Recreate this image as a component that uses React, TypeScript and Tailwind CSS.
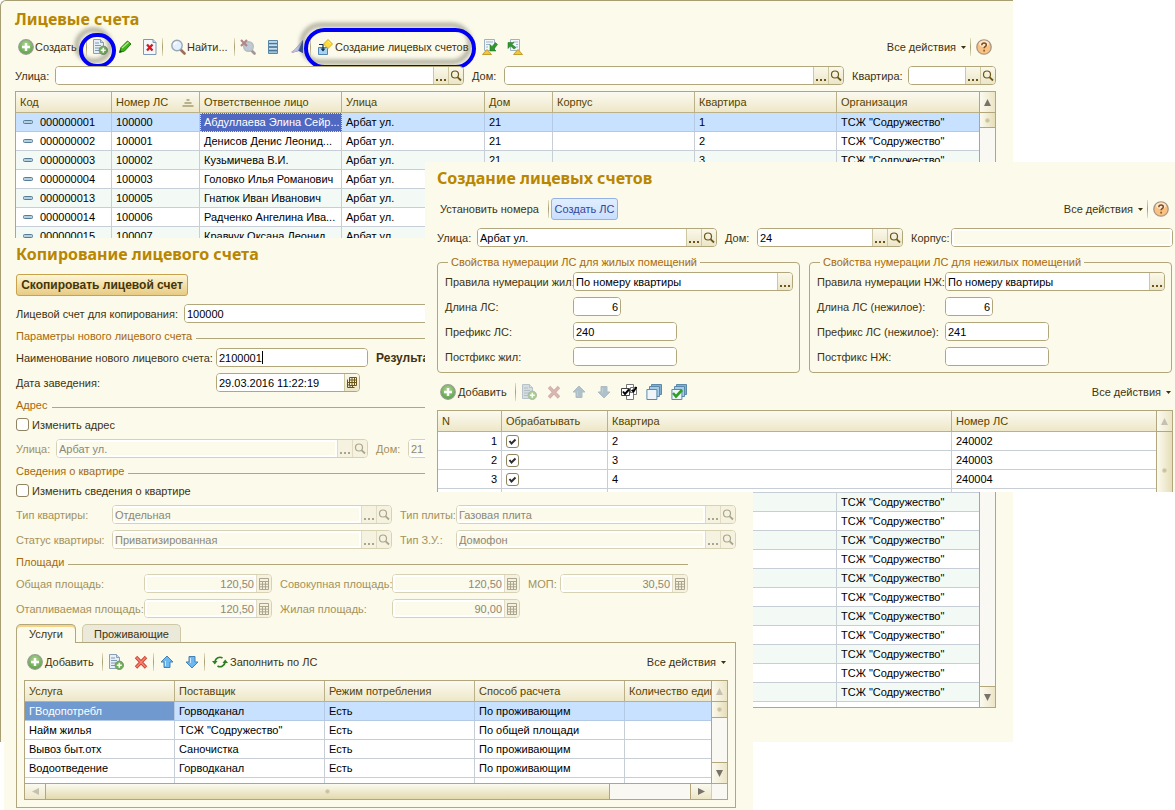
import React, { useId } from 'react';

/* ---------- icons ---------- */

type IconProps = { dim?: boolean };

const PlusIcon = () => (
  <svg viewBox="0 0 16 16" className="w-4 h-4 shrink-0">
    <defs>
      <radialGradient id="plusFill" cx="50%" cy="35%" r="65%">
        <stop offset="0" stopColor="#b4d894" />
        <stop offset="1" stopColor="#56a146" />
      </radialGradient>
    </defs>
    <circle cx="8" cy="8" r="7.3" fill="url(#plusFill)" stroke="#97a092" strokeWidth="1.2" />
    <path d="M8 4v8M4 8h8" stroke="#fff" strokeWidth="2.4" />
  </svg>
);

const CopyDocIcon = ({ dim }: IconProps) => (
  <svg viewBox="0 0 16 16" className={dim ? 'w-4 h-4 opacity-60' : 'w-4 h-4'}>
    <path d="M1.5.5h7l3 3v11h-10z" fill={dim ? '#bccbd6' : '#e6eff6'} stroke="#8aa0b4" />
    <path d="M8.5.5v3h3" fill="#c8d8e6" stroke="#8aa0b4" />
    <path d="M3 4h4M3 6.5h6M3 9h5M3 11.5h4" stroke="#7f99b2" />
    <circle cx="11.3" cy="11.3" r="4.2" fill="#6db056" stroke="#7c8f74" />
    <path d="M11.3 8.800v5M8.800 11.300h5" stroke="#fff" strokeWidth="1.6" />
  </svg>
);

const PencilIcon = () => (
  <svg viewBox="0 0 16 16" className="w-4 h-4">
    <path d="M2.500 13.500l1.500-5L10.500 2l3.500 3L7.500 12z" fill="#3fb618" stroke="#23780c" />
    <path d="M5 9L11.500 3.300" stroke="#b4ee8a" strokeWidth="1.200" />
    <path d="M2.500 13.500l.5-2.500 2 1.800z" fill="#1d4d0a" />
  </svg>
);

const DeleteDocIcon = () => (
  <svg viewBox="0 0 16 16" className="w-4 h-4">
    <path d="M1.500.5h9.500L14 3.500v12H1.500z" fill="#f4f8fb" stroke="#7d99b5" />
    <path d="M11 .5v3h3" fill="#c8d8e6" stroke="#7d99b5" />
    <path d="M5 5.500l5.500 6M10.500 5.500L5 11.500" stroke="#d8161b" strokeWidth="2.300" />
  </svg>
);

const FindIcon = () => (
  <svg viewBox="0 0 16 16" className="w-4 h-4 shrink-0">
    <path d="M10.500 10.500l4 4" stroke="#9a7058" strokeWidth="2.600" strokeLinecap="round" />
    <circle cx="7" cy="6.500" r="5.200" fill="#e4f0fb" stroke="#98a8b9" strokeWidth="1.400" />
    <path d="M4 6a3.500 3.500 0 013-2.500" fill="none" stroke="#fff" strokeWidth="1.400" />
  </svg>
);

const FindCancelIcon = () => (
  <svg viewBox="0 0 16 16" className="w-4 h-4 opacity-80">
    <path d="M11.500 11.500l3 3" stroke="#8d7b80" strokeWidth="2.600" strokeLinecap="round" />
    <circle cx="8.500" cy="7.500" r="4.800" fill="#b0bfd0" stroke="#a3aeba" strokeWidth="1.400" />
    <path d="M1 1l6 6M7 1L1 7" stroke="#9e6b74" strokeWidth="2.200" />
  </svg>
);

const ListIcon = () => (
  <svg viewBox="0 0 16 16" className="w-4 h-4">
    <path d="M3.500 1.500h9v13h-9z" fill="#9cc2dd" stroke="#5b86a3" />
    <path d="M4 4.500h8M4 8h8M4 11.500h8" stroke="#4d7794" strokeWidth="1.300" />
    <path d="M4 3h8M4 6.200h8M4 9.800h8" stroke="#dceefa" />
  </svg>
);

const FanIcon = () => (
  <svg viewBox="0 0 16 16" className="w-4 h-4">
    <path d="M1.500 14L13 1v13l-4-2z" fill="#5f6fae" />
    <path d="M1.500 14L13 1 8 12z" fill="#b9c3e4" />
    <path d="M9 12l4-11v13z" fill="#2f4d9a" />
    <path d="M1 13l4-3-2 4z" fill="#d9a6b4" />
  </svg>
);

const CreateAccountsIcon = () => (
  <svg viewBox="0 0 16 16" className="w-4 h-4 shrink-0">
    <path d="M1.500 8.500h9v7h-9z" fill="#a9d2f1" stroke="#5185b2" />
    <path d="M2 5.500h4v6" fill="none" stroke="#15304a" strokeWidth="1.200" />
    <path d="M3.500 9.500L6 12.500l2.500-3z" fill="#15304a" />
    <path d="M11 .5L15.500 5 11 9.500 6.500 5z" fill="#ffdc3c" stroke="#d0aa24" />
    <path d="M11 2l2.500 2.500" stroke="#fff6b8" />
  </svg>
);

const ImportIcon = () => (
  <svg viewBox="0 0 16 16" className="w-4 h-4">
    <path d="M2.500.5h10v11h-10z" fill="#f1f6fa" stroke="#9fb2c4" />
    <path d="M4 3h7M4 5.500h4M4 8h2" stroke="#9fb2c4" />
    <path d="M13.500 3.500L10 7.500 8 5.500V12h6L12 10l3.500-4.500z" fill="#2f9a2b" stroke="#1b6a1c" strokeWidth=".5" />
    <path d="M.5 15.500h9L5 10.500z" fill="#f0c63c" stroke="#c49d2a" />
  </svg>
);

const ExportIcon = () => (
  <svg viewBox="0 0 16 16" className="w-4 h-4">
    <path d="M3.500.5h9v11h-9z" fill="#f1f6fa" stroke="#9fb2c4" />
    <path d="M6 3h5M9 5.500h2M9 8h2" stroke="#9fb2c4" />
    <path d="M7 10L3.500 7 1 9.500V3.500h6L5 5.500l4 3z" fill="#2f9a2b" stroke="#1b6a1c" strokeWidth=".5" />
    <path d="M6.500 15.500h9L11 10.500z" fill="#f0c63c" stroke="#c49d2a" />
  </svg>
);

const HelpIcon = () => (
  <svg viewBox="0 0 16 16" className="w-4 h-4">
    <circle cx="8" cy="8" r="7.200" fill="#f9c283" stroke="#a89484" strokeWidth="1.300" />
    <ellipse cx="8" cy="4.800" rx="5" ry="3.200" fill="#fde6cb" />
    <path d="M5.800 6.200c0-3 4.500-2.800 4.500-.2 0 1.700-2.200 1.700-2.200 3.300M8.100 10.700v1.700" fill="none" stroke="#7d4a1c" strokeWidth="1.500" />
  </svg>
);

const CrossIcon = ({ dim }: IconProps) => (
  <svg viewBox="0 0 16 16" className={dim ? 'w-4 h-4 opacity-50' : 'w-4 h-4'}>
    <path d="M3 3l10 10.500M13 3L3 13.500" stroke={dim ? '#a8676b' : '#cf4638'} strokeWidth="3.400" />
    <path d="M3.500 3.500l9 9.500M12.500 3.500L3.500 13" stroke={dim ? '#b8797b' : '#f58370'} strokeWidth="1.600" />
  </svg>
);

const ArrowIcon = ({ dim, down }: IconProps & { down?: boolean }) => (
  <svg viewBox="0 0 16 16" className={dim ? 'w-4 h-4 opacity-70' : 'w-4 h-4'}>
    <path
      d={down ? 'M8 14L2 8h3V2.500h6V8h3z' : 'M8 2l6 6h-3v5.500H5V8H2z'}
      fill={dim ? '#8fa9bd' : '#6cb8f0'}
      stroke={dim ? '#8fa3b2' : '#4681b3'}
      strokeLinejoin="round"
    />
    <path d={down ? 'M6.500 4v5' : 'M6.500 7v5'} stroke={dim ? '#a9bccb' : '#c8e8ff'} />
  </svg>
);

const RefreshIcon = () => (
  <svg viewBox="0 0 16 16" className="w-4 h-4 shrink-0">
    <path d="M3 7.500A5 5 0 0110.500 4M13 8.500A5 5 0 015.500 12" fill="none" stroke="#2c7d23" strokeWidth="1.700" />
    <path d="M0 7h5.500L2.800 10.500zM16 9h-5.500l2.700-3.500z" fill="#2c7d23" />
  </svg>
);

const MarkAllIcon = () => (
  <svg viewBox="0 0 16 16" className="w-4 h-4">
    <path d="M5.500.5h7v6h-7zM9.500 3.500h6v7h-6z" fill="#fff" stroke="#777" />
    <path d="M5.500 8.500h7v7h-7z" fill="#fff" stroke="#777" />
    <path d="M.5 4.500h8v7h-8z" fill="#fff" stroke="#444" />
    <path d="M2 7.500l2 2.500 4-4.500M11 6l1.500 1.500L15.500 3" fill="none" stroke="#000" strokeWidth="2" />
  </svg>
);

const StackIcon = ({ check }: { check?: boolean }) => (
  <svg viewBox="0 0 16 16" className="w-4 h-4">
    <path d="M5.500.5h10v10h-10z" fill="#7fb0d2" stroke="#5d8aaa" />
    <path d="M3.500 2.500h10v10h-10z" fill="#a5cbe5" stroke="#5d8aaa" />
    <path d="M.9 5.500h10v10H.9z" fill="#eef6fb" stroke="#5d8aaa" />
    {check && <path d="M2 9l3 3.500 6-6.500" fill="none" stroke="#2fa01f" strokeWidth="2.600" />}
  </svg>
);

const LensIcon = () => (
  <svg viewBox="0 0 14 14" className="w-[14px] h-[14px]" fill="none" stroke="currentColor">
    <circle cx="6" cy="5.500" r="3.500" strokeWidth="1.200" />
    <path d="M8.700 8.300l3.300 3.200" strokeWidth="1.800" />
  </svg>
);

const DotsIcon = () => (
  <svg viewBox="0 0 14 14" className="w-[14px] h-[14px]" fill="currentColor">
    <path d="M2 10h2v2H2zM6 10h2v2H6zM10 10h2v2h-2z" />
  </svg>
);

const CalendarIcon = () => (
  <svg viewBox="0 0 14 14" className="w-[14px] h-[14px]" fill="none" stroke="currentColor">
    <path d="M4.500 1.500h7v8h-7zM4.500 4h7M4.500 6.500h7M7 1.500v8M9.500 1.500v8" />
    <path d="M2.500 3.500v8h7M2.500 6.500h2M2.500 9h2M5 9.500v2M7.500 9.500v2" />
  </svg>
);

const CalcIcon = () => (
  <svg viewBox="0 0 14 14" className="w-[14px] h-[14px]" fill="none" stroke="currentColor">
    <path d="M2.500 1.500h9v11h-9zM2.500 4.500h9M2.500 7.200h9M2.500 9.800h9M5.500 4.500v8M8.500 4.500v8" />
  </svg>
);

const RowMark = () => (
  <svg viewBox="0 0 12 6" className="inline-block w-3 h-[6px] ml-[2px] mr-[6px] align-[1px]">
    <rect x="1.500" y="1.500" width="9" height="3" rx="1" fill="#b4cfde" stroke="#567d97" />
  </svg>
);

const SortMark = () => (
  <svg viewBox="0 0 12 8" className="inline-block w-3 h-2 ml-[14px]">
    <path d="M4.500 0h3v2h-3zM2.500 3h7v2h-7zM.5 6h11v2H.5z" fill="#b9b18c" />
  </svg>
);

/* ---------- form parts ---------- */

type Addon = 'dots' | 'lens' | 'calendar' | 'calc';

const addonIcons: Record<Addon, React.ReactNode> = {
  dots: <DotsIcon />,
  lens: <LensIcon />,
  calendar: <CalendarIcon />,
  calc: <CalcIcon />,
};

const addonNames: Record<Addon, string> = {
  dots: 'Выбрать',
  lens: 'Открыть',
  calendar: 'Календарь',
  calc: 'Калькулятор',
};

interface FieldProps {
  label: string;
  value?: string;
  labelClass?: string;
  boxClass?: string;
  className?: string;
  addons?: Addon[];
  disabled?: boolean;
  readOnly?: boolean;
  right?: boolean;
  caret?: boolean;
}

const Field: React.FC<FieldProps> = ({
  label, value = '', labelClass = '', boxClass = '', className = '', addons = [], disabled, readOnly, right, caret,
}) => {
  const id = useId();
  return (
    <div className={`flex items-center h-[19px] ${className}`}>
      <label htmlFor={id} className={`shrink-0 whitespace-nowrap ${disabled ? 'text-[#a3925c]' : ''} ${labelClass}`}>
        {label}
      </label>
      <div
        className={`relative flex h-[19px] min-w-0 rounded-[4px] border overflow-hidden ${
          disabled ? 'border-[#d8d2b4] text-[#8b8878]' : 'border-[#b1a67c] text-black'
        } ${boxClass}`}
      >
        <input
          id={id}
          defaultValue={value}
          disabled={disabled}
          readOnly={readOnly}
          className={`flex-1 w-0 min-w-0 outline-none ${right ? 'text-right' : ''} ${
            disabled || readOnly ? 'bg-[#fcfaeb] border-2 border-white' : 'bg-white px-[2px]'
          }`}
        />
        {caret && <span className="absolute left-[45px] top-[2px] w-px h-[13px] bg-black" />}
        {addons.map((a) => (
          <button
            key={a}
            type="button"
            aria-label={addonNames[a]}
            disabled={disabled}
            className={`w-[15px] shrink-0 border-l flex items-center justify-center ${
              disabled
                ? 'border-[#e0dbc2] bg-[#f5f2df] text-[#aaa58c]'
                : 'border-[#cfc7a2] bg-linear-to-b from-[#faf8ea] to-[#ece6c8] text-[#6b5618]'
            }`}
          >
            {addonIcons[a]}
          </button>
        ))}
      </div>
    </div>
  );
};

const Check: React.FC<{ label?: string; name?: string; checked?: boolean }> = ({ label, name, checked }) => (
  <label className="flex items-center gap-[3px] h-[13px]">
    <span className="relative w-[13px] h-[13px] shrink-0">
      <input
        type="checkbox"
        aria-label={label ? undefined : name}
        defaultChecked={checked}
        className="peer appearance-none block w-[13px] h-[13px] bg-white border border-[#8f8562] rounded-[3px]"
      />
      <svg viewBox="0 0 13 13" className="absolute inset-0 hidden peer-checked:block pointer-events-none">
        <path d="M3.500 6l2 2.500 4-4" fill="none" stroke="#2d2d2d" strokeWidth="2" />
      </svg>
    </span>
    {label}
  </label>
);

const GroupTitle: React.FC<{ children: React.ReactNode; className?: string }> = ({ children, className = '' }) => (
  <h3 className={`flex items-center gap-1 h-4 text-[#a8690a] ${className}`}>
    {children}
    <span className="flex-1 h-px bg-[#b1a67c] mt-1" />
  </h3>
);

/* ---------- toolbar parts ---------- */

const Sep = () => <span className="w-px h-[18px] shrink-0 bg-linear-to-b from-[#e6e0c4] via-[#a89e74] to-[#e6e0c4]" />;

const IconBtn: React.FC<{ name: string; children: React.ReactNode }> = ({ name, children }) => (
  <button type="button" aria-label={name} className="relative flex items-center justify-center w-[25px] h-[22px] shrink-0">
    {children}
  </button>
);

const AllActions = () => (
  <button type="button" className="flex items-center gap-[5px] h-[22px] whitespace-nowrap">
    Все действия
    <svg viewBox="0 0 5 3" className="w-[5px] h-[3px]">
      <path d="M0 0h5L2.500 3z" fill="#3d3210" />
    </svg>
  </button>
);

const WindowTitle: React.FC<{ children: React.ReactNode }> = ({ children }) => (
  <h2 className="h-5 leading-5 text-[16px] font-bold text-[#b88600] font-['Noto_Sans',sans-serif]">{children}</h2>
);

/* ---------- grid parts ---------- */

const thClass =
  'h-[21px] px-1 text-left font-normal text-[#574400] border-b border-r border-[#bbb189] bg-linear-to-b from-[#fbfaf0] to-[#eee7c8] whitespace-nowrap overflow-hidden last:border-r-0';
const tdClass = 'h-[19px] px-1 pt-px leading-[17px] border-b border-r whitespace-nowrap overflow-hidden last:border-r-0';

const Triangle: React.FC<{ dir: 'up' | 'down' | 'left' | 'right'; dim?: boolean }> = ({ dir, dim }) => {
  const shapes = { up: 'M4.500 0L9 9H0z', down: 'M0 0h9L4.500 9z', left: 'M9 0v9L0 4.500z', right: 'M0 0l9 4.500L0 9z' };
  return (
    <svg viewBox="0 0 9 9" className="w-[7px] h-[7px]">
      <path d={shapes[dir]} fill={dim ? '#c5c0b1' : '#77736c'} />
    </svg>
  );
};

const Grip = () => <span className="w-[5px] h-[5px] rounded-full bg-[#c9c19c] border border-[#dcd5b5]" />;

const ScrollY: React.FC<{ dim?: boolean; thumb: string; end?: boolean }> = ({ dim, thumb, end }) => (
  <div className="w-4 shrink-0 flex flex-col border-l border-[#b1a67c] bg-[#faf8f2]">
    <button type="button" aria-label="Вверх" className="h-[21px] shrink-0 border-b border-[#b1a67c] bg-linear-to-r from-[#fbfaf0] to-[#ece5c6] flex items-center justify-center">
      <Triangle dir="up" dim={dim} />
    </button>
    <div className={`${thumb} shrink-0 border-b border-[#b1a67c] bg-linear-to-r from-[#fbfaf0] to-[#e6deb8] flex items-center justify-center`}>
      <Grip />
    </div>
    <div className="flex-1" />
    {end && (
      <button type="button" aria-label="Вниз" className="h-[21px] shrink-0 border-t border-[#b1a67c] bg-linear-to-r from-[#fbfaf0] to-[#ece5c6] flex items-center justify-center">
        <Triangle dir="down" />
      </button>
    )}
  </div>
);

/* ---------- data ---------- */

const org = 'ТСЖ "Содружество"';

interface Account {
  code?: string;
  number?: string;
  person?: string;
  house?: string;
  flat?: string;
  org?: string;
}

const accounts: Account[] = [
  { code: '000000001', number: '100000', person: 'Абдуллаева Элина Сейр...', house: '21', flat: '1', org },
  { code: '000000002', number: '100001', person: 'Денисов Денис Леонид...', house: '21', flat: '2', org },
  { code: '000000003', number: '100002', person: 'Кузьмичева В.И.', house: '21', flat: '3', org },
  { code: '000000004', number: '100003', person: 'Головко Илья Романович' },
  { code: '000000013', number: '100005', person: 'Гнатюк Иван Иванович' },
  { code: '000000014', number: '100006', person: 'Радченко Ангелина Ива...' },
  { code: '000000015', number: '100007', person: 'Кравчук Оксана Леонид...' },
];

// the middle of the list lies under the other windows
const accountRows: Account[] = [
  ...accounts,
  ...Array.from({ length: 13 }, () => ({})),
  ...Array.from({ length: 11 }, () => ({ org })),
];

const services = [
  ['ГВодопотребл', 'Горводканал', 'Есть', 'По проживающим'],
  ['Найм жилья', org, 'Есть', 'По общей площади'],
  ['Вывоз быт.отх', 'Саночистка', 'Есть', 'По проживающим'],
  ['Водоотведение', 'Горводканал', 'Есть', 'По проживающим'],
];

const flats = [
  ['1', '2', '240002'],
  ['2', '3', '240003'],
  ['3', '4', '240004'],
];

/* ---------- windows ---------- */

const AccountsWindow = () => (
  <section className="mr-[162px] pt-2 pl-[14px] pr-[17px] pb-[34px] bg-[#fcfaeb] border-t border-l border-[#a89e74] rounded-tl-md">
    <WindowTitle>Лицевые счета</WindowTitle>

    <div className="flex items-center h-[22px] mt-[7px]">
      <button type="button" className="flex items-center gap-px w-[71px] pl-[3px]">
        <PlusIcon />
        Создать
      </button>
      <Sep />
      <IconBtn name="Скопировать">
        <CopyDocIcon />
        <span className="absolute left-[-8px] top-[-3px] w-[37px] h-[35px] rounded-full border-4 border-[#0000f5] drop-shadow-[-4px_-5px_2px_rgba(90,90,70,0.55)] pointer-events-none" />
      </IconBtn>
      <IconBtn name="Изменить"><PencilIcon /></IconBtn>
      <IconBtn name="Пометить на удаление"><DeleteDocIcon /></IconBtn>
      <Sep />
      <button type="button" className="flex items-center gap-px w-[71px] pl-[7px]">
        <FindIcon />
        Найти...
      </button>
      <Sep />
      <IconBtn name="Отменить поиск"><FindCancelIcon /></IconBtn>
      <IconBtn name="Список"><ListIcon /></IconBtn>
      <IconBtn name="Отбор"><FanIcon /></IconBtn>
      <Sep />
      <button type="button" className="relative flex items-center gap-[2px] w-[166px] h-[22px] pl-[6px] whitespace-nowrap">
        <CreateAccountsIcon />
        Создание лицевых счетов
        <span className="absolute left-[-7px] top-[-8px] w-[172px] h-[41px] rounded-full border-4 border-[#0000f5] drop-shadow-[-4px_-5px_2px_rgba(90,90,70,0.55)] pointer-events-none" />
      </button>
      <IconBtn name="Загрузить"><ImportIcon /></IconBtn>
      <IconBtn name="Выгрузить"><ExportIcon /></IconBtn>
      <div className="ml-auto flex items-center">
        <AllActions />
        <span className="w-1" />
        <Sep />
        <IconBtn name="Справка"><HelpIcon /></IconBtn>
      </div>
    </div>

    <div className="flex gap-2 mt-2">
      <Field label="Улица:" labelClass="w-10" boxClass="flex-1" className="flex-[449]" addons={['dots', 'lens']} />
      <Field label="Дом:" labelClass="w-8" boxClass="flex-1" className="flex-[372]" addons={['dots', 'lens']} />
      <Field label="Квартира:" labelClass="w-14" boxClass="w-[88px]" addons={['dots', 'lens']} />
    </div>

    <div className="flex h-[617px] mt-[6px] border border-[#b1a67c] bg-white overflow-hidden">
      <div className="flex-1 overflow-hidden">
        <table className="w-full table-fixed border-separate border-spacing-0 text-black">
          <colgroup>
            <col className="w-[96px]" />
            <col className="w-[88px]" />
            <col className="w-[142px]" />
            <col className="w-[143px]" />
            <col className="w-[68px]" />
            <col className="w-[142px]" />
            <col className="w-[142px]" />
            <col />
          </colgroup>
          <thead>
            <tr>
              <th className={thClass}>Код</th>
              <th className={thClass}>Номер ЛС<SortMark /></th>
              <th className={thClass}>Ответственное лицо</th>
              <th className={thClass}>Улица</th>
              <th className={thClass}>Дом</th>
              <th className={thClass}>Корпус</th>
              <th className={thClass}>Квартира</th>
              <th className={thClass}>Организация</th>
            </tr>
          </thead>
          <tbody>
            {accountRows.map((row, i) => {
              const tone = i === 0 ? 'bg-[#c8e1ff] border-[#b3c9e4]' : i % 2 ? 'bg-white border-[#c8ced6]' : 'bg-[#f3faf6] border-[#c8ced6]';
              return (
                <tr key={i}>
                  <td className={`${tdClass} ${tone}`}>{row.code && <><RowMark />{row.code}</>}</td>
                  <td className={`${tdClass} ${tone}`}>{row.number}</td>
                  {i === 0 ? (
                    <td className="h-[19px] px-[3px] leading-[17px] bg-[#4f68c2] text-white border border-dotted border-[#d5dcf5] whitespace-nowrap overflow-hidden">{row.person}</td>
                  ) : (
                    <td className={`${tdClass} ${tone}`}>{row.person}</td>
                  )}
                  <td className={`${tdClass} ${tone}`}>{row.code && 'Арбат ул.'}</td>
                  <td className={`${tdClass} ${tone}`}>{row.house}</td>
                  <td className={`${tdClass} ${tone}`} />
                  <td className={`${tdClass} ${tone}`}>{row.flat}</td>
                  <td className={`${tdClass} ${tone}`}>{row.org}</td>
                </tr>
              );
            })}
            <tr>
              {Array.from({ length: 8 }, (_, i) => (
                <td key={i} className={`${tdClass} bg-white border-[#c8ced6]`} />
              ))}
            </tr>
          </tbody>
        </table>
      </div>
      <ScrollY thumb="h-[15px]" end />
    </div>
  </section>
);

const CopyWindow = () => (
  <section className="absolute left-1 right-[422px] top-[238px] pt-[6px] pl-3 pr-[17px] pb-[2px] bg-[#fcfaeb]">
    <WindowTitle>Копирование лицевого счета</WindowTitle>

    <button
      type="button"
      className="block mt-[10px] h-[22px] w-[172px] rounded-[3px] border border-[#c9a24c] bg-linear-to-b from-[#fdf6dc] via-[#f3e0a8] to-[#e8cb84] font-bold text-[#463508] text-[12px] leading-5 whitespace-nowrap"
    >
      Скопировать лицевой счет
    </button>

    <Field className="mt-2" label="Лицевой счет для копирования:" labelClass="w-[168px]" boxClass="flex-1" value="100000" />

    <GroupTitle className="mt-[5px]">Параметры нового лицевого счета</GroupTitle>
    <div className="flex items-center mt-1">
      <Field label="Наименование нового лицевого счета:" labelClass="w-[200px]" boxClass="w-[152px]" value="2100001" caret />
      <b className="ml-2 text-[12px]">Результат</b>
    </div>
    <Field className="mt-[6px]" label="Дата заведения:" labelClass="w-[200px]" boxClass="w-36" value="29.03.2016 11:22:19" addons={['calendar']} />

    <GroupTitle className="mt-[5px]">Адрес</GroupTitle>
    <div className="mt-[5px]"><Check label="Изменить адрес" /></div>
    <div className="flex gap-2 mt-2">
      <Field disabled label="Улица:" labelClass="w-10" boxClass="w-[312px]" value="Арбат ул." addons={['dots', 'lens']} />
      <Field disabled className="flex-1" label="Дом:" labelClass="w-8" boxClass="flex-1" value="21" />
    </div>

    <GroupTitle className="mt-[5px]">Сведения о квартире</GroupTitle>
    <div className="mt-[5px]"><Check label="Изменить сведения о квартире" /></div>
    <div className="flex gap-2 mt-2">
      <Field disabled label="Тип квартиры:" labelClass="w-24" boxClass="w-[280px]" value="Отдельная" addons={['dots', 'lens']} />
      <Field disabled className="flex-1" label="Тип плиты:" labelClass="w-14" boxClass="flex-1" value="Газовая плита" addons={['dots', 'lens']} />
    </div>
    <div className="flex gap-2 mt-[6px]">
      <Field disabled label="Статус квартиры:" labelClass="w-24" boxClass="w-[280px]" value="Приватизированная" addons={['dots', 'lens']} />
      <Field disabled className="flex-1" label="Тип З.У.:" labelClass="w-14" boxClass="flex-1" value="Домофон" addons={['dots', 'lens']} />
    </div>

    <GroupTitle className="mt-[5px] w-[672px]">Площади</GroupTitle>
    <div className="flex gap-2 mt-1">
      <Field disabled right label="Общая площадь:" labelClass="w-32" boxClass="w-32" value="120,50" addons={['calc']} />
      <Field disabled right label="Совокупная площадь:" labelClass="w-28" boxClass="w-32" value="120,50" addons={['calc']} />
      <Field disabled right label="МОП:" labelClass="w-8" boxClass="w-32" value="30,50" addons={['calc']} />
    </div>
    <div className="flex gap-2 mt-[6px]">
      <Field disabled right label="Отапливаемая площадь:" labelClass="w-32" boxClass="w-32" value="120,50" addons={['calc']} />
      <Field disabled right label="Жилая площадь:" labelClass="w-28" boxClass="w-32" value="90,00" addons={['calc']} />
    </div>

    <div role="tablist" className="flex items-end gap-[6px] mt-[6px]">
      <button type="button" role="tab" aria-selected="true" className="relative -mb-px w-[60px] h-[19px] border border-b-0 border-[#b1a67c] rounded-t-[5px] bg-[#fcfaeb] shadow-[inset_0_2px_0_#f6d48a]">
        Услуги
      </button>
      <button type="button" role="tab" aria-selected="false" className="w-[99px] h-[18px] border border-b-0 border-[#cfc8a6] rounded-t-[5px] bg-[#ebe9da]">
        Проживающие
      </button>
    </div>
    <div className="border border-[#b1a67c] pt-2 px-[7px] pb-[7px]">
      <div className="flex items-center h-[22px]">
        <button type="button" className="flex items-center gap-[2px] w-[78px] pl-[3px]">
          <PlusIcon />
          Добавить
        </button>
        <Sep />
        <IconBtn name="Скопировать"><CopyDocIcon /></IconBtn>
        <IconBtn name="Удалить"><CrossIcon /></IconBtn>
        <Sep />
        <IconBtn name="Переместить вверх"><ArrowIcon /></IconBtn>
        <IconBtn name="Переместить вниз"><ArrowIcon down /></IconBtn>
        <Sep />
        <button type="button" className="flex items-center gap-[2px] pl-[7px] whitespace-nowrap">
          <RefreshIcon />
          Заполнить по ЛС
        </button>
        <div className="ml-auto pr-[2px]"><AllActions /></div>
      </div>

      <div className="mt-[7px] border border-[#b1a67c] bg-white">
        <div className="flex h-[102px]">
          <div className="flex-1 overflow-hidden">
            <table className="w-full table-fixed border-separate border-spacing-0 text-black">
              <colgroup>
                <col className="w-[150px]" />
                <col className="w-[150px]" />
                <col className="w-[150px]" />
                <col className="w-[150px]" />
                <col />
              </colgroup>
              <thead>
                <tr>
                  {['Услуга', 'Поставщик', 'Режим потребления', 'Способ расчета', 'Количество единиц'].map((h) => (
                    <th key={h} className={thClass}>{h}</th>
                  ))}
                </tr>
              </thead>
              <tbody>
                {services.map((row, i) => (
                  <tr key={row[0]}>
                    {[...row, ''].map((cell, j) => (
                      <td
                        key={j}
                        className={`${tdClass} ${
                          i > 0 ? 'border-[#c8ced6]' : j === 0 ? 'bg-[#6f99cf] text-white border-[#b3c9e4]' : 'bg-[#c8e1ff] border-[#b3c9e4]'
                        }`}
                      >
                        {cell}
                      </td>
                    ))}
                  </tr>
                ))}
                <tr>
                  {Array.from({ length: 5 }, (_, j) => <td key={j} className={`${tdClass} border-[#c8ced6]`} />)}
                </tr>
              </tbody>
            </table>
          </div>
          <ScrollY dim thumb="h-4" end />
        </div>
        <div className="flex h-4 border-t border-[#b1a67c] bg-[#faf8f2]">
          <button type="button" aria-label="Влево" className="w-[21px] border-r border-[#b1a67c] bg-linear-to-b from-[#fbfaf0] to-[#ece5c6] flex items-center justify-center">
            <Triangle dir="left" dim />
          </button>
          <div className="w-[564px] border-r border-[#b1a67c] bg-linear-to-b from-[#fbfaf0] to-[#e2d9ac] flex items-center justify-center"><Grip /></div>
          <div className="flex-1" />
          <button type="button" aria-label="Вправо" className="w-[21px] border-l border-[#b1a67c] bg-linear-to-b from-[#fbfaf0] to-[#ece5c6] flex items-center justify-center">
            <Triangle dir="right" />
          </button>
          <span className="w-4 border-l border-[#d6cfae]" />
        </div>
      </div>
    </div>
  </section>
);

interface NumberingProps {
  title: string;
  labels: string[];
  prefix: string;
}

const Numbering: React.FC<NumberingProps> = ({ title, labels, prefix }) => (
  <fieldset className="flex-1 min-w-0 border border-[#b1a67c] rounded-[4px] pl-[7px] pr-[6px] pb-[6px]">
    <legend className="ml-[3px] px-[3px] h-4 leading-4 text-[#a8690a]">{title}</legend>
    <div className="flex flex-col gap-[6px] pt-[2px]">
      <Field label={labels[0]} labelClass="w-32" boxClass="flex-1" value="По номеру квартиры" addons={['dots']} />
      <Field label={labels[1]} labelClass="w-32" boxClass="w-12" value="6" right />
      <Field label={labels[2]} labelClass="w-32" boxClass="w-[104px]" value={prefix} />
      <Field label={labels[3]} labelClass="w-32" boxClass="w-[104px]" />
    </div>
  </fieldset>
);

const CreateWindow = () => (
  <section className="absolute left-[425px] right-0 top-[162px] h-[330px] overflow-hidden pt-[6px] pl-3 pr-[2px] bg-[#fcfaeb]">
    <WindowTitle>Создание лицевых счетов</WindowTitle>

    <div className="flex items-center h-[22px] mt-[10px]">
      <button type="button" className="w-[111px] pl-[3px] text-left whitespace-nowrap">Установить номера</button>
      <Sep />
      <button type="button" className="ml-[2px] w-[67px] h-[22px] rounded-[3px] border border-[#94b2e6] bg-linear-to-b from-[#e2eefe] to-[#c9dfff] text-[#34479a] whitespace-nowrap">
        Создать ЛС
      </button>
      <div className="ml-auto flex items-center">
        <AllActions />
        <span className="w-1" />
        <Sep />
        <IconBtn name="Справка"><HelpIcon /></IconBtn>
      </div>
    </div>

    <div className="flex gap-2 mt-2">
      <Field className="flex-[280]" label="Улица:" labelClass="w-10" boxClass="flex-1" value="Арбат ул." addons={['dots', 'lens']} />
      <Field className="flex-[178]" label="Дом:" labelClass="w-8" boxClass="flex-1" value="24" addons={['dots', 'lens']} />
      <Field className="flex-[262]" label="Корпус:" labelClass="w-10" boxClass="flex-1" readOnly />
    </div>

    <div className="flex gap-[9px] mt-[7px] pr-px">
      <Numbering
        title="Свойства нумерации ЛС для жилых помещений"
        labels={['Правила нумерации жил:', 'Длина ЛС:', 'Префикс ЛС:', 'Постфикс жил:']}
        prefix="240"
      />
      <Numbering
        title="Свойства нумерации ЛС для нежилых помещений"
        labels={['Правила нумерации НЖ:', 'Длина ЛС (нежилое):', 'Префикс ЛС (нежилое):', 'Постфикс НЖ:']}
        prefix="241"
      />
    </div>

    <div className="flex items-center h-[22px] mt-2">
      <button type="button" className="flex items-center gap-[2px] w-[78px] pl-[3px]">
        <PlusIcon />
        Добавить
      </button>
      <Sep />
      <IconBtn name="Скопировать"><CopyDocIcon dim /></IconBtn>
      <IconBtn name="Удалить"><CrossIcon dim /></IconBtn>
      <IconBtn name="Переместить вверх"><ArrowIcon dim /></IconBtn>
      <IconBtn name="Переместить вниз"><ArrowIcon dim down /></IconBtn>
      <IconBtn name="Инвертировать флажки"><MarkAllIcon /></IconBtn>
      <IconBtn name="Снять флажки"><StackIcon /></IconBtn>
      <IconBtn name="Установить флажки"><StackIcon check /></IconBtn>
      <div className="ml-auto pr-[2px]"><AllActions /></div>
    </div>

    <div className="flex h-[120px] mt-[7px] border border-[#b1a67c] bg-white overflow-hidden">
      <div className="flex-1 overflow-hidden">
        <table className="w-full table-fixed border-separate border-spacing-0 text-black">
          <colgroup>
            <col className="w-16" />
            <col className="w-[106px]" />
            <col />
            <col className="w-[204px]" />
          </colgroup>
          <thead>
            <tr>
              {['N', 'Обрабатывать', 'Квартира', 'Номер ЛС'].map((h) => (
                <th key={h} className={thClass}>{h}</th>
              ))}
            </tr>
          </thead>
          <tbody>
            {flats.map(([n, flat, number]) => (
              <tr key={n}>
                <td className={`${tdClass} border-[#c8ced6] text-right`}>{n}</td>
                <td className={`${tdClass} border-[#c8ced6]`}><Check name={`Обрабатывать ${n}`} checked /></td>
                <td className={`${tdClass} border-[#c8ced6]`}>{flat}</td>
                <td className={`${tdClass} border-[#c8ced6]`}>{number}</td>
              </tr>
            ))}
            <tr>
              {Array.from({ length: 4 }, (_, i) => <td key={i} className={`${tdClass} border-[#c8ced6]`} />)}
            </tr>
          </tbody>
        </table>
      </div>
      <ScrollY dim thumb="h-[78px]" />
    </div>
  </section>
);

export default function App() {
  return (
    <main className="relative min-h-screen overflow-hidden bg-white text-[11px] leading-4 text-[#403311] font-['Liberation_Sans',Arial,sans-serif]">
      <AccountsWindow />
      <CopyWindow />
      <CreateWindow />
    </main>
  );
}
